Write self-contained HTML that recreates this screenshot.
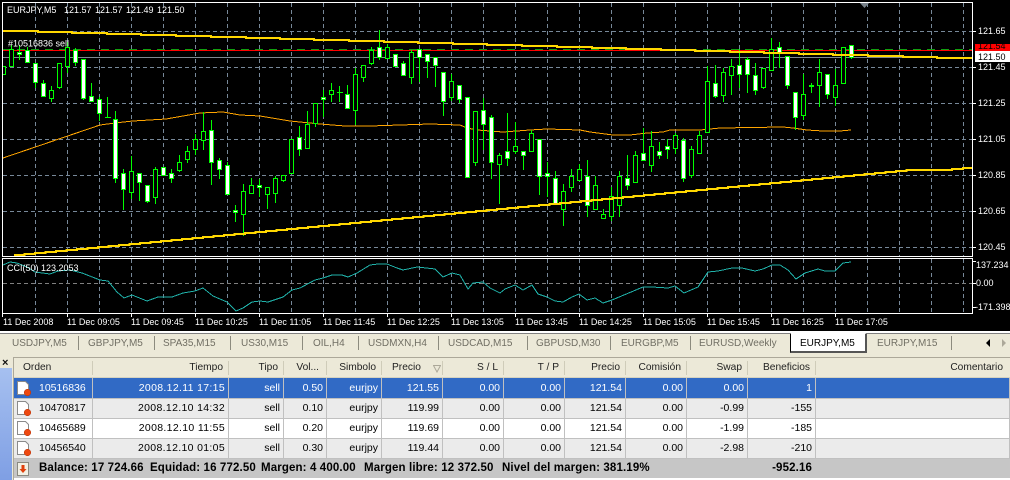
<!DOCTYPE html>
<html><head><meta charset="utf-8"><style>
*{box-sizing:border-box}
html,body{margin:0;padding:0;width:1010px;height:480px;overflow:hidden;background:#ece9d8;font-family:"Liberation Sans",sans-serif}
#c{position:absolute;left:0;top:0}
.abs{position:absolute;white-space:pre}
.tb{font-size:10px;color:#716f64;top:337px;line-height:13px}
.sep{position:absolute;top:336px;width:1px;height:14px;background:#8c8b7e}
.hd{position:absolute;top:358px;height:20px;font-size:10.2px;line-height:19px;color:#222;white-space:pre}
.hs{position:absolute;top:361px;width:1px;height:14px;background:#cfccb9}
table{position:absolute;left:14px;top:378px;width:996px;table-layout:fixed;border-collapse:separate;border-spacing:0;font-size:10.5px;color:#000}
td{height:20px;padding:0 3px 0 0;text-align:right;border-right:1px solid #c0c0c0;border-bottom:1px solid #c0c0c0;line-height:17px;white-space:nowrap;overflow:hidden}
td.o{text-align:left;padding-left:25px}
td.d{letter-spacing:.33px}
tr.a td{height:21px;background:#316ac5;color:#fff}
tr.g td{background:#ebebeb}
tr.w td{background:#fff}
.b{position:absolute;top:459px;font-size:11.5px;font-weight:bold;line-height:19px;color:#000;white-space:pre;letter-spacing:.13px}
</style></head><body>
<svg id="c" width="1010" height="334" viewBox="0 0 1010 334" style="background:#000;font-family:'Liberation Sans',sans-serif;font-size:9px">
<g stroke="#778899" stroke-width="1" stroke-dasharray="4 3" fill="none" shape-rendering="crispEdges">
<path d="M3 31.5H972M3 67.5H972M3 103.5H972M3 139.5H972M3 175.5H972M3 211.5H972M3 247.5H972"/>
<path d="M35.5 3V256M67.5 3V256M99.5 3V256M131.5 3V256M163.5 3V256M195.5 3V256M227.5 3V256M259.5 3V256M291.5 3V256M323.5 3V256M355.5 3V256M387.5 3V256M419.5 3V256M451.5 3V256M483.5 3V256M515.5 3V256M547.5 3V256M579.5 3V256M611.5 3V256M643.5 3V256M675.5 3V256M707.5 3V256M739.5 3V256M771.5 3V256M803.5 3V256M835.5 3V256M867.5 3V256M899.5 3V256M931.5 3V256M963.5 3V256"/>
<path d="M35.5 259V313M67.5 259V313M99.5 259V313M131.5 259V313M163.5 259V313M195.5 259V313M227.5 259V313M259.5 259V313M291.5 259V313M323.5 259V313M355.5 259V313M387.5 259V313M419.5 259V313M451.5 259V313M483.5 259V313M515.5 259V313M547.5 259V313M579.5 259V313M611.5 259V313M643.5 259V313M675.5 259V313M707.5 259V313M739.5 259V313M771.5 259V313M803.5 259V313M835.5 259V313M867.5 259V313M899.5 259V313M931.5 259V313M963.5 259V313"/>
<path d="M3 283.5H972" stroke="#808080"/>
</g>
<path d="M3 57.5H972" stroke="#808890" shape-rendering="crispEdges"/>
<path d="M3 49.5H972" stroke="#10a010" stroke-dasharray="8 6" shape-rendering="crispEdges"/>
<path d="M3 50.5H972" stroke="#ff0000" shape-rendering="crispEdges"/>
<polyline fill="none" stroke="#ffa500" stroke-width="1" shape-rendering="crispEdges" points="3,158 100,125 115,123 133,121 166,119 200,113 223,112 240,115 260,116 290,121 320,124 345,126 370,126 400,125 430,124 460,125 467,128 477,130 503,132 530,130 547,129 580,130 590,132 613,135 630,135 647,133 663,132 670,130 700,130 720,128 783,127 793,128 807,130 823,131 840,131 851,130"/>
<path stroke="#00ff00" fill="none" shape-rendering="crispEdges" d="M11.5 45V66M19.5 45V60M27.5 47V63M35.5 63V88M43.5 80V97M51.5 86V102M59.5 63V89M67.5 42V73M75.5 48V66M83.5 59V100M91.5 83V101M99.5 97V121M107.5 97V118M115.5 111V183M123.5 169V210M131.5 156V199M139.5 173V201M147.5 185V203M155.5 167V204M163.5 167V175M171.5 169V183M179.5 155V172M187.5 146V163M195.5 134V155M203.5 112V150M211.5 120V185M219.5 158V179M227.5 162V194M235.5 205V222M243.5 184V236M251.5 178V194M259.5 179V197M267.5 187V209M275.5 176V203M283.5 175V182M291.5 139V173M299.5 126V156M307.5 111V148M315.5 103V127M323.5 90V117M331.5 83V102M339.5 86V102M347.5 85V108M355.5 68V125M363.5 65V82M371.5 47V65M379.5 30V60M387.5 44V58M395.5 54V66M403.5 61V75M411.5 50V84M419.5 49V82M427.5 54V78M435.5 57V87M443.5 72V116M451.5 74V101M459.5 85V103M467.5 97V177M475.5 111V166M483.5 98V150M491.5 115V179M499.5 153V204M507.5 113V166M515.5 122V154M523.5 151V170M531.5 130V151M539.5 139V195M547.5 162V197M555.5 171V204M563.5 184V226M571.5 169V192M579.5 164V180M587.5 160V217M595.5 176V209M603.5 209V218M611.5 187V221M619.5 171V217M627.5 155V190M635.5 151V182M643.5 128V160M651.5 131V172M659.5 142V159M667.5 139V159M675.5 133V154M683.5 138V182M691.5 146V178M699.5 131V153M707.5 66V132M715.5 65V98M723.5 68V102M731.5 59V95M739.5 49V88M747.5 57V93M755.5 63V95M763.5 68V89M771.5 38V70M779.5 42V68M787.5 56V89M795.5 92V130M803.5 74V120M811.5 83V93M819.5 59V107M827.5 74V99M835.5 69V106M843.5 47V83M851.5 45V59M105 117.5h6M337 92.5h6"/>
<path fill="#000" stroke="#00ff00" shape-rendering="crispEdges" d="M2.5 66.5h3v8h-3zM9.5 49.5h4v17h-4zM49.5 90.5h4v8h-4zM57.5 63.5h4v24h-4zM65.5 47.5h4v19h-4zM129.5 171.5h4v21h-4zM153.5 169.5h4v28h-4zM177.5 162.5h4v8h-4zM185.5 151.5h4v8h-4zM193.5 139.5h4v10h-4zM201.5 131.5h4v9h-4zM241.5 191.5h4v23h-4zM249.5 185.5h4v8h-4zM265.5 187.5h4v7h-4zM273.5 178.5h4v15h-4zM281.5 175.5h4v5h-4zM289.5 139.5h4v34h-4zM305.5 124.5h4v24h-4zM313.5 103.5h4v20h-4zM329.5 90.5h4v4h-4zM353.5 74.5h4v36h-4zM361.5 65.5h4v12h-4zM369.5 50.5h4v13h-4zM385.5 47.5h4v11h-4zM409.5 52.5h4v25h-4zM449.5 81.5h4v16h-4zM473.5 111.5h4v51h-4zM497.5 155.5h4v9h-4zM513.5 146.5h4v5h-4zM529.5 133.5h4v18h-4zM561.5 191.5h4v18h-4zM569.5 176.5h4v11h-4zM577.5 169.5h4v11h-4zM593.5 185.5h4v24h-4zM601.5 214.5h4v4h-4zM609.5 196.5h4v20h-4zM617.5 176.5h4v29h-4zM633.5 155.5h4v27h-4zM649.5 146.5h4v19h-4zM673.5 135.5h4v13h-4zM689.5 149.5h4v26h-4zM697.5 135.5h4v18h-4zM705.5 81.5h4v51h-4zM721.5 72.5h4v23h-4zM729.5 66.5h4v9h-4zM761.5 68.5h4v19h-4zM769.5 49.5h4v21h-4zM801.5 94.5h4v21h-4zM817.5 72.5h4v13h-4zM833.5 85.5h4v12h-4zM841.5 47.5h4v36h-4z"/>
<path fill="#fff" stroke="#00ff00" shape-rendering="crispEdges" d="M17.5 52.5h4v2h-4zM25.5 50.5h4v12h-4zM33.5 63.5h4v19h-4zM41.5 83.5h4v13h-4zM73.5 50.5h4v12h-4zM81.5 59.5h4v39h-4zM89.5 96.5h4v5h-4zM97.5 99.5h4v14h-4zM113.5 119.5h4v59h-4zM121.5 173.5h4v16h-4zM137.5 173.5h4v9h-4zM145.5 185.5h4v16h-4zM161.5 167.5h4v8h-4zM169.5 173.5h4v5h-4zM209.5 130.5h4v32h-4zM217.5 160.5h4v9h-4zM225.5 165.5h4v29h-4zM233.5 210.5h4v2h-4zM257.5 185.5h4v2h-4zM297.5 137.5h4v12h-4zM321.5 97.5h4v2h-4zM345.5 94.5h4v14h-4zM377.5 47.5h4v10h-4zM393.5 54.5h4v12h-4zM401.5 63.5h4v12h-4zM417.5 49.5h4v8h-4zM425.5 54.5h4v7h-4zM433.5 57.5h4v8h-4zM441.5 72.5h4v29h-4zM457.5 85.5h4v14h-4zM465.5 97.5h4v80h-4zM481.5 110.5h4v14h-4zM489.5 117.5h4v45h-4zM505.5 151.5h4v7h-4zM521.5 151.5h4v4h-4zM537.5 139.5h4v37h-4zM545.5 173.5h4v3h-4zM553.5 178.5h4v26h-4zM585.5 176.5h4v29h-4zM625.5 178.5h4v7h-4zM641.5 153.5h4v7h-4zM657.5 151.5h4v4h-4zM665.5 146.5h4v3h-4zM681.5 140.5h4v38h-4zM713.5 83.5h4v13h-4zM737.5 65.5h4v9h-4zM745.5 59.5h4v15h-4zM753.5 75.5h4v15h-4zM777.5 47.5h4v5h-4zM785.5 56.5h4v29h-4zM793.5 92.5h4v25h-4zM809.5 85.5h4v1h-4zM825.5 74.5h4v20h-4zM849.5 45.5h4v12h-4z"/>
<path fill="none" stroke="#ffd700" stroke-width="2" shape-rendering="crispEdges" d="M3 31H38V32H72V33H107V34H141V35H176V36H211V37H246V38H280V39H314V40H349V41H384V42H418V43H453V44H487V45H522V46H557V47H592V48H626V49H661V50H695V51H730V52H764V53H799V54H833V55H868V56H903V57H937V58H972"/>
<path fill="none" stroke="#ffd700" stroke-width="2" shape-rendering="crispEdges" d="M14 255h10.500v-1h10.500v-1h10.500v-1h10.500v-1h10.500v-1h10.500v-1h10.500v-1h10.500v-1h10.500v-1h10.500v-1h10.500v-1h10.500v-1h10.500v-1h10.500v-1h10.500v-1h10.500v-1h10.500v-1h10.500v-1h10.500v-1h10.500v-1h10.500v-1h10.500v-1h10.500v-1h10.500v-1h10.500v-1h10.500v-1h10.500v-1h10.500v-1h10.500v-1h10.500v-1h10.500v-1h10.500v-1h10.500v-1h10.500v-1h10.500v-1h10.500v-1h10.500v-1h10.500v-1h10.500v-1h10.500v-1h10.500v-1h10.500v-1h10.500v-1h10.500v-1h10.500v-1h10.500v-1h10.500v-1h10.500v-1h10.500v-1h10.500v-1h10.500v-1h10.500v-1h10.500v-1h10.500v-1h10.500v-1h10.500v-1h10.500v-1h10.500v-1h10.500v-1h10.500v-1h10.500v-1h10.500v-1h10.500v-1h10.500v-1h10.500v-1h10.500v-1h10.500v-1h10.500v-1h10.500v-1h10.500v-1h10.500v-1h10.500v-1h10.500v-1h10.500v-1h10.500v-1h10.500v-1h10.500v-1h10.500v-1h10.500v-1h10.500v-1h10.500v-1h10.500v-1h10.500v-1h10.500v-1h10.500v-1H952v-1H963v-1H972"/>
<polyline fill="none" stroke="#20b2aa" stroke-width="1" shape-rendering="crispEdges" points="3,265 10,262 17,263 27,267 35,272 50,274 58,271 70,270 82,273 100,280 108,281 117,292 124,298 132,295 147,301 158,297 172,297 183,293 195,291 203,288 213,296 227,302 236,311 243,308 252,302 260,301 268,302 283,297 292,290 300,288 315,280 323,278 332,275 342,275 348,277 357,273 370,265 378,264 387,264 397,268 403,270 417,267 435,269 443,277 452,273 460,275 468,289 473,283 483,282 490,288 500,293 505,289 515,285 523,290 532,285 538,294 547,297 555,301 563,302 572,297 579,294 587,300 595,298 603,303 612,300 643,287 652,287 668,288 675,286 684,293 698,287 708,272 718,271 732,268 742,268 755,271 763,269 772,265 780,265 788,270 796,279 805,273 818,269 825,271 835,271 843,263 851,262"/>
<path d="M860 3h9l-4.500 5z" fill="#778088"/>
<g shape-rendering="crispEdges" fill="none" stroke="#fff">
<path d="M2.500 2.500H972.500V256.500H2.500zM2.500 258.500H972.500V313.500H2.500z"/>
<path d="M973 31.500h3M973 67.500h3M973 103.500h3M973 139.500h3M973 175.500h3M973 211.500h3M973 247.500h3M973 261.500h3M973 283.500h3M973 307.500h3"/>
<path d="M2.500 314v3M67.500 314v3M131.500 314v3M195.500 314v3M259.500 314v3M323.500 314v3M387.500 314v3M451.500 314v3M515.500 314v3M579.500 314v3M643.500 314v3M707.500 314v3M771.500 314v3M835.500 314v3"/>
</g>
<rect x="975" y="44" width="35" height="7" fill="#ff0000"/>
<rect x="975" y="51" width="35" height="11" fill="#fff"/>
<g fill="#fff">
<text x="7" y="13">EURJPY,M5</text><text x="64" y="13">121.57</text><text x="95" y="13">121.57</text><text x="126" y="13">121.49</text><text x="157" y="13">121.50</text>
<text x="8" y="46.500">#10516836 sell</text>
<text x="7" y="271">CCI(50) 123.2053</text>
<text x="978" y="34">121.65</text><text x="978" y="70">121.45</text><text x="978" y="106">121.25</text><text x="978" y="142">121.05</text><text x="978" y="178">120.85</text><text x="978" y="214">120.65</text><text x="978" y="250">120.45</text>
<text x="976" y="268">137.234</text><text x="976" y="286">0.00</text><text x="975" y="310">-171.398</text>
<text x="3" y="325">11 Dec 2008</text><text x="67" y="325">11 Dec 09:05</text><text x="131" y="325">11 Dec 09:45</text><text x="195" y="325">11 Dec 10:25</text><text x="259" y="325">11 Dec 11:05</text><text x="323" y="325">11 Dec 11:45</text><text x="387" y="325">11 Dec 12:25</text><text x="451" y="325">11 Dec 13:05</text><text x="515" y="325">11 Dec 13:45</text><text x="579" y="325">11 Dec 14:25</text><text x="643" y="325">11 Dec 15:05</text><text x="707" y="325">11 Dec 15:45</text><text x="771" y="325">11 Dec 16:25</text><text x="835" y="325">11 Dec 17:05</text>
</g>
<text x="978" y="49" fill="#000">121.54</text>
<text x="978" y="60" fill="#000">121.50</text>
<rect x="0" y="331" width="1010" height="2" fill="#fff"/>
<rect x="0" y="333" width="1010" height="1" fill="#808080"/>
</svg>
<div class="tb abs" style="left:12px">USDJPY,M5</div><div class="sep" style="left:78px"></div>
<div class="tb abs" style="left:88px">GBPJPY,M5</div><div class="sep" style="left:154px"></div>
<div class="tb abs" style="left:163px">SPA35,M15</div><div class="sep" style="left:230px"></div>
<div class="tb abs" style="left:241px">US30,M15</div><div class="sep" style="left:302px"></div>
<div class="tb abs" style="left:313px">OIL,H4</div><div class="sep" style="left:358px"></div>
<div class="tb abs" style="left:368px">USDMXN,H4</div><div class="sep" style="left:438px"></div>
<div class="tb abs" style="left:448px">USDCAD,M15</div><div class="sep" style="left:527px"></div>
<div class="tb abs" style="left:536px">GBPUSD,M30</div><div class="sep" style="left:610px"></div>
<div class="tb abs" style="left:621px">EURGBP,M5</div><div class="sep" style="left:690px"></div>
<div class="tb abs" style="left:699px">EURUSD,Weekly</div>
<div class="abs" style="left:790px;top:333px;width:77px;height:20px;background:#fff;border:1px solid #000;border-top-color:#fff;border-right:2px solid #555;border-bottom:2px solid #555"></div>
<div class="tb abs" style="left:800px;color:#000">EURJPY,M5</div>
<div class="tb abs" style="left:877px">EURJPY,M15</div><div class="sep" style="left:951px"></div>
<svg class="abs" style="left:984px;top:339px" width="24" height="9"><path d="M6 0v8L2 4z" fill="#000"/><path d="M18 0v8l4-4z" fill="#aca899"/></svg>

<div class="abs" style="left:0;top:368px;width:12px;height:112px;background:linear-gradient(#a6c0f0,#7f9fe4)"></div>
<div class="abs" style="left:2px;top:357px;font-size:11px;font-weight:bold;color:#111;line-height:12px">×</div>
<div class="abs" style="left:13px;top:357px;width:997px;height:1px;background:#aca899"></div>
<div class="abs" style="left:13px;top:357px;width:1px;height:123px;background:#aca899"></div>
<div class="abs" style="left:14px;top:377px;width:996px;height:1px;background:#d6d3c0"></div>
<div class="hd" style="left:23px">Orden</div>
<div class="hd" style="right:787px">Tiempo</div>
<div class="hd" style="right:732px">Tipo</div>
<div class="hd" style="right:691px">Vol...</div>
<div class="hd" style="right:634px">Simbolo</div>
<div class="hd" style="left:392px">Precio</div>
<svg class="abs" style="left:433px;top:365px" width="8" height="8"><path d="M.5 .5h7L4 7z" fill="none" stroke="#aca899"/></svg>
<div class="hd" style="right:512px">S / L</div>
<div class="hd" style="right:451px">T / P</div>
<div class="hd" style="right:390px">Precio</div>
<div class="hd" style="right:329px">Comisión</div>
<div class="hd" style="right:268px">Swap</div>
<div class="hd" style="right:200px">Beneficios</div>
<div class="hd" style="right:7px">Comentario</div>
<div class="hs" style="left:92px"></div><div class="hs" style="left:228px"></div><div class="hs" style="left:283px"></div><div class="hs" style="left:326px"></div><div class="hs" style="left:381px"></div><div class="hs" style="left:442px"></div><div class="hs" style="left:503px"></div><div class="hs" style="left:564px"></div><div class="hs" style="left:625px"></div><div class="hs" style="left:686px"></div><div class="hs" style="left:747px"></div><div class="hs" style="left:815px"></div>

<table>
<colgroup><col style="width:79px"><col style="width:136px"><col style="width:55px"><col style="width:43px"><col style="width:55px"><col style="width:61px"><col style="width:61px"><col style="width:61px"><col style="width:61px"><col style="width:61px"><col style="width:61px"><col style="width:68px"><col style="width:194px"></colgroup>
<tr class="a"><td class="o">10516836</td><td class="d">2008.12.11 17:15</td><td>sell</td><td>0.50</td><td>eurjpy</td><td>121.55</td><td>0.00</td><td>0.00</td><td>121.54</td><td>0.00</td><td>0.00</td><td>1</td><td></td></tr>
<tr class="g"><td class="o">10470817</td><td class="d">2008.12.10 14:32</td><td>sell</td><td>0.10</td><td>eurjpy</td><td>119.99</td><td>0.00</td><td>0.00</td><td>121.54</td><td>0.00</td><td>-0.99</td><td>-155</td><td></td></tr>
<tr class="w"><td class="o">10465689</td><td class="d">2008.12.10 11:55</td><td>sell</td><td>0.20</td><td>eurjpy</td><td>119.69</td><td>0.00</td><td>0.00</td><td>121.54</td><td>0.00</td><td>-1.99</td><td>-185</td><td></td></tr>
<tr class="g"><td class="o">10456540</td><td class="d">2008.12.10 01:05</td><td>sell</td><td>0.30</td><td>eurjpy</td><td>119.44</td><td>0.00</td><td>0.00</td><td>121.54</td><td>0.00</td><td>-2.98</td><td>-210</td><td></td></tr>
</table>

<svg class="abs" style="left:16px;top:380px" width="16" height="80">
<g stroke="#8a8a8a" fill="#fff">
<path d="M1.500 1.500h8l3 3v10h-11z"/><path d="M1.500 21.500h8l3 3v10h-11z"/><path d="M1.500 41.500h8l3 3v10h-11z"/><path d="M1.500 61.500h8l3 3v10h-11z"/>
</g>
<g fill="#ee4810" stroke="#b03008" stroke-width=".5">
<circle cx="11.500" cy="12.500" r="3.300"/><circle cx="11.500" cy="32.500" r="3.300"/><circle cx="11.500" cy="52.500" r="3.300"/><circle cx="11.500" cy="72.500" r="3.300"/>
</g>
</svg>

<div class="abs" style="left:14px;top:459px;width:996px;height:19px;background:#c6c6c6"></div>
<div class="abs" style="left:14px;top:478px;width:996px;height:2px;background:#fff"></div>
<svg class="abs" style="left:17px;top:462px" width="12" height="14"><rect x=".5" y=".5" width="11" height="13" fill="#f2f0e4" stroke="#8a8a80"/><path d="M4.500 3h3v4h2L6 11 2.500 7h2z" fill="#e0400c"/></svg>
<div class="b" style="left:39px">Balance: 17 724.66</div>
<div class="b" style="left:150px">Equidad: 16 772.50</div>
<div class="b" style="left:261px">Margen: 4 400.00</div>
<div class="b" style="left:364px">Margen libre: 12 372.50</div>
<div class="b" style="left:502px">Nivel del margen: 381.19%</div>
<div class="b" style="right:198px">-952.16</div>
</body></html>
